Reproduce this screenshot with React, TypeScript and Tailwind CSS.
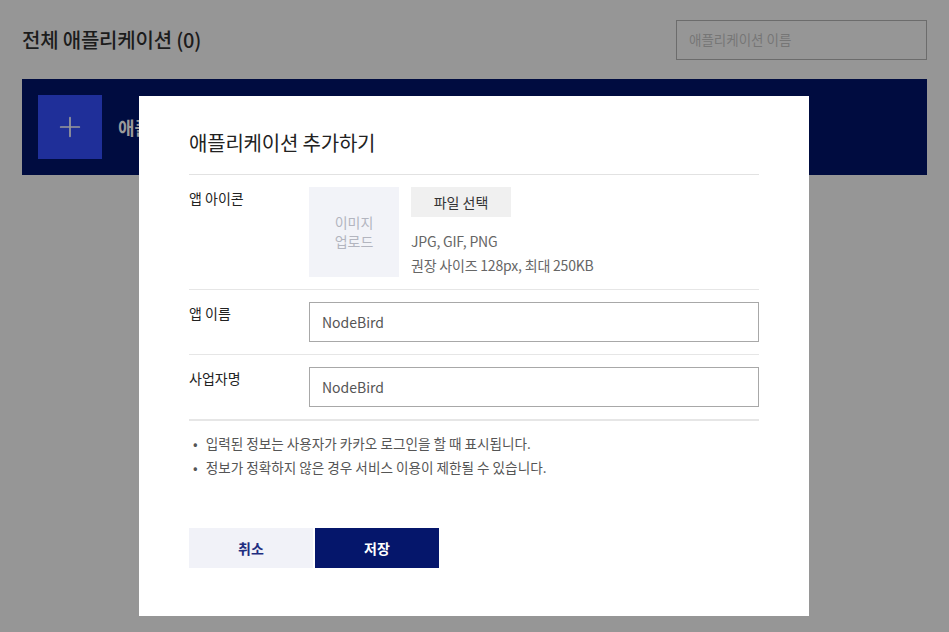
import { Plus } from "lucide-react";

const font = { fontFamily: '"Noto Sans CJK KR", "Noto Sans", sans-serif' };

const Row = ({ label, children, last }: { label: string; children: React.ReactNode; last?: boolean }) => (
  <div className={`flex py-3 ${last ? "" : "border-b border-[#e6e6e6]"}`}>
    <div className="w-[120px] shrink-0 pt-px text-[14px] leading-[21px] text-[#222]">{label}</div>
    <div className="flex-1">{children}</div>
  </div>
);

export default function App() {
  return (
    <div className="relative h-[632px] w-full overflow-hidden bg-[#969696]" style={font}>
      <div className="px-[22px]">
        <div className="flex h-[79px] items-center justify-between">
          <h1 className="text-[20px] font-medium tracking-[-0.2px] text-[#1c1c1c]">전체 애플리케이션 (0)</h1>
          <div className="flex h-[40px] w-[251px] items-center border border-[#6c6c6c] px-3 text-[13.5px] text-[#767676]">
            애플리케이션 이름
          </div>
        </div>
        <div className="flex h-[96px] items-center gap-4 bg-[#000c40] px-4">
          <div className="flex h-16 w-16 items-center justify-center bg-[#1f2f99]">
            <Plus className="h-8 w-8 text-[#9a9a9a]" strokeWidth={1.3} />
          </div>
          <span className="text-[18px] font-bold text-[#9a9a9a]">애플리케이션</span>
        </div>
      </div>

      <div className="absolute inset-0 flex pl-[139px] pt-[96px]">
        <div className="h-[520px] w-[670px] bg-white px-[50px] pt-8">
          <h2 className="border-b border-[#e2e2e2] pb-4 text-[20px] leading-[30px] tracking-[-0.2px] text-[#222]">
            애플리케이션 추가하기
          </h2>

          <Row label="앱 아이콘">
            <div className="flex gap-3">
              <div className="flex h-[90px] w-[90px] items-center justify-center bg-[#f2f3f8] text-center text-[14px] leading-[19px] text-[#b3b5bf]">
                이미지
                <br />
                업로드
              </div>
              <div>
                <button className="h-[30px] w-[100px] bg-[#f0f0f0] text-[14px] text-[#333]">파일 선택</button>
                <div className="mt-[12px] text-[14px] leading-[24px] tracking-[-0.2px] text-[#666]">
                  <p>JPG, GIF, PNG</p>
                  <p>권장 사이즈 128px, 최대 250KB</p>
                </div>
              </div>
            </div>
          </Row>

          <Row label="앱 이름">
            <div className="flex h-[40px] items-center border border-[#a8a8a8] px-3 text-[14px] text-[#555]">NodeBird</div>
          </Row>

          <Row label="사업자명">
            <div className="flex h-[40px] items-center border border-[#a8a8a8] px-3 text-[14px] text-[#555]">NodeBird</div>
          </Row>

          <ul className="border-t border-[#e6e6e6] pt-[10px] text-[13.6px] leading-[24px] text-[#555]">
            <li className="flex gap-2 pl-1">
              <span>•</span>
              <span>입력된 정보는 사용자가 카카오 로그인을 할 때 표시됩니다.</span>
            </li>
            <li className="flex gap-2 pl-1">
              <span>•</span>
              <span>정보가 정확하지 않은 경우 서비스 이용이 제한될 수 있습니다.</span>
            </li>
          </ul>

          <div className="mt-[49px] flex gap-[2px]">
            <button className="h-[40px] w-[124px] bg-[#f1f2f8] text-[14px] font-bold text-[#1f2e80]">취소</button>
            <button className="h-[40px] w-[124px] bg-[#05166b] text-[14px] font-bold text-white">저장</button>
          </div>
        </div>
      </div>
    </div>
  );
}
